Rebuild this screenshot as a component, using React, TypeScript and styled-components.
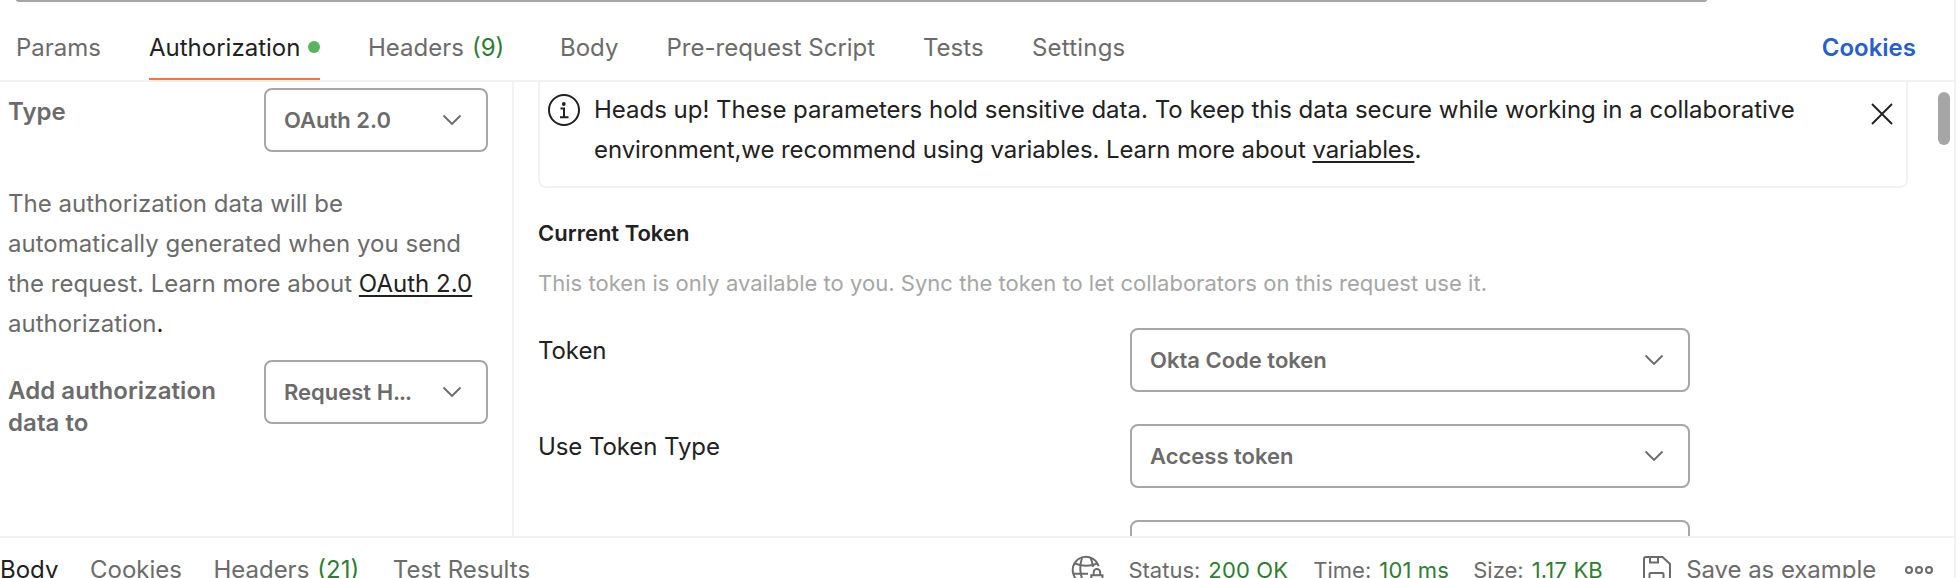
import React from "react";
import styled, { createGlobalStyle } from "styled-components";

const ink = "#212121";
const grey = "#6b6b6b";
const pale = "#a6a6a6";
const line = "#f2f2f2";
const green = "#2e7d32";

const GlobalStyle = createGlobalStyle`
  * { box-sizing: border-box; }
  body {
    margin: 0;
    background: #fff;
    color: ${ink};
    font-family: Inter, "Liberation Sans", sans-serif;
    font-size: 24px;
    overflow: hidden;
  }
`;

const Window = styled.div`
  width: 1956px;
  height: 578px;
  border-right: 2px solid ${line};
  display: flex;
  flex-direction: column;
  overflow: hidden;
  white-space: nowrap;
`;

const UrlBarEdge = styled.div`
  flex: none;
  height: 2px;
  margin: 0 247px 0 16px;
  background: ${pale};
  border-radius: 0 0 4px 4px / 0 0 2px 2px;
`;

const TabBar = styled.nav`
  flex: none;
  height: 80px;
  padding: 0 38px 0 16px;
  display: flex;
  border-bottom: 2px solid ${line};
`;

const Tab = styled.a<{ $active?: boolean; $width: number; $gap: number; $tracking?: number }>`
  display: flex;
  align-items: center;
  width: ${(p) => p.$width}px;
  height: 78px;
  padding-top: ${(p) => (p.$active ? 14 : 12)}px;
  margin-right: ${(p) => p.$gap}px;
  letter-spacing: ${(p) => p.$tracking ?? 0}px;
  color: ${(p) => (p.$active ? ink : grey)};
  border-bottom: ${(p) => (p.$active ? "2px solid #f37542" : "0")};
`;

const Count = styled.span`
  margin-left: 8px;
  color: ${green};
`;

const Dot = styled.span`
  width: 12px;
  height: 12px;
  margin-left: auto;
  border-radius: 50%;
  background: #58b55c;
`;

const CookiesLink = styled.a`
  margin-left: auto;
  height: 78px;
  padding-top: 12px;
  display: flex;
  align-items: center;
  font-weight: 600;
  color: #265fd1;
`;

const Main = styled.div`
  flex: none;
  height: 454px;
  display: flex;
  overflow: hidden;
`;

const Sidebar = styled.aside`
  width: 514px;
  padding: 6px 24px 0 8px;
  border-right: 2px solid ${line};
`;

const SideRow = styled.div`
  display: flex;
  justify-content: space-between;
`;

const SideLabel = styled.div<{ $top: number }>`
  padding-top: ${(p) => p.$top}px;
  font-weight: 600;
  line-height: 32px;
  letter-spacing: 0.06px;
  color: ${grey};
`;

const SideText = styled.p`
  margin: 32px 0 16px;
  line-height: 40px;
  letter-spacing: 0.02px;
  color: ${grey};
`;

const Link = styled.a`
  color: ${ink};
  text-decoration: underline;
  text-decoration-thickness: 2px;
  text-underline-offset: 3px;
`;

const Stop = styled.span`
  color: ${ink};
`;

const SelectBox = styled.div<{ $width: number }>`
  flex: none;
  width: ${(p) => p.$width}px;
  height: 64px;
  padding: 0 24px 0 18px;
  display: flex;
  align-items: center;
  justify-content: space-between;
  border: 2px solid ${pale};
  border-radius: 8px;
  font-size: 22px;
  font-weight: 600;
  color: ${grey};
`;

const Dots = styled.span`
  letter-spacing: -1px;
`;

const Content = styled.section`
  flex: 1;
  padding-left: 24px;
`;

const Banner = styled.div`
  width: 1370px;
  height: 106px;
  padding: 8px 12px 0 7px;
  display: flex;
  align-items: flex-start;
  border: 2px solid ${line};
  border-top: 0;
  border-radius: 0 0 8px 8px;
`;

const BannerText = styled.p`
  flex: 1;
  margin: 0 0 0 13px;
  line-height: 40px;
  letter-spacing: -0.01px;
`;

const BannerTail = styled.span`
  letter-spacing: -0.08px;
`;

const Heading = styled.h2`
  margin: 31px 0 0;
  font-size: 22px;
  line-height: 28px;
  font-weight: 600;
`;

const Hint = styled.p`
  margin: 22px 0 31px;
  font-size: 22px;
  line-height: 28px;
  letter-spacing: 0.025px;
  color: ${pale};
`;

const Field = styled.div`
  display: flex;
  height: 96px;
`;

const FieldLabel = styled.label`
  width: 592px;
  padding-top: 9px;
  line-height: 28px;
  letter-spacing: -0.08px;
`;

const ScrollTrack = styled.div`
  width: 16px;
  padding-top: 10px;
`;

const ScrollThumb = styled.div`
  width: 12px;
  height: 53px;
  border-radius: 6px;
  background: ${pale};
`;

const Footer = styled.footer`
  flex: none;
  height: 64px;
  padding: 16px 20px 0 0;
  display: flex;
  align-items: flex-start;
  border-top: 2px solid ${line};
  color: ${grey};
  line-height: 32px;
`;

const FooterTab = styled.span<{ $active?: boolean; $width: number }>`
  width: ${(p) => p.$width}px;
  color: ${(p) => (p.$active ? ink : grey)};
`;

const Stat = styled.span<{ $width: number }>`
  width: ${(p) => p.$width}px;
  font-size: 22px;
  line-height: 32px;
`;

const StatValue = styled.span`
  margin-left: 8px;
  letter-spacing: 0.15px;
  color: ${green};
`;

const IconSlot = styled.span<{ $width: number; $top?: number }>`
  width: ${(p) => p.$width}px;
  padding-top: ${(p) => p.$top ?? 0}px;
  display: flex;
`;

const BannerIcon = styled.span<{ $top: number }>`
  display: flex;
  padding-top: ${(p) => p.$top}px;
`;

const SaveLabel = styled.span`
  width: 218px;
  letter-spacing: -0.05px;
`;

const Chevron = () => (
  <svg width="20" height="12" viewBox="0 0 20 12" fill="none" stroke={grey} strokeWidth="1.9">
    <path d="M1.5 1.5 10 10l8.500-8.500" />
  </svg>
);

const InfoIcon = () => (
  <svg width="34" height="34" viewBox="0 0 34 34" fill="none" stroke={ink} strokeWidth="2">
    <circle cx="17" cy="17" r="15" />
    <path d="M13.500 15.500H17V24.500M13 24.300h8.500" />
    <circle cx="16.800" cy="11" r="1.900" fill={ink} stroke="none" />
  </svg>
);

const CloseIcon = () => (
  <svg width="24" height="24" viewBox="0 0 24 24" fill="none" stroke={ink} strokeWidth="1.900">
    <path d="M2 2l20 20M22 2 2 22" />
  </svg>
);

const GlobeLockIcon = () => (
  <svg width="34" height="34" viewBox="0 0 34 34" fill="none" stroke={grey} strokeWidth="2">
    <path d="M27.600 12.300A13.200 13.200 0 1 0 17 29" />
    <path d="M11 4C8.500 11 8.500 21 13 29M19.500 3.600Q21.500 8 22 13" />
    <path d="M4 9.500Q15 14 26.500 9.500M3 19.800H17" />
    <path d="M22.700 21v-2.700a3.200 3.200 0 0 1 6.400 0V21M20.300 21.300H31.500v10H20.300z" />
  </svg>
);

const SaveIcon = () => (
  <svg width="28" height="28" viewBox="0 0 28 28" fill="none" stroke={grey} strokeWidth="2">
    <path d="M3 1h16.500L27 8v17q0 2-2 2H3q-2 0-2-2V3q0-2 2-2z" />
    <path d="M7 1v5.500h8V1M6.500 27v-9q0-1 1-1h12q1 0 1 1v9" />
  </svg>
);

const MoreIcon = () => (
  <svg width="30" height="10" viewBox="0 0 30 10" fill="none" stroke={grey} strokeWidth="2">
    <circle cx="5" cy="5" r="3" />
    <circle cx="15" cy="5" r="3" />
    <circle cx="25" cy="5" r="3" />
  </svg>
);

const Select = ({ width, children }: { width: number; children?: React.ReactNode }) => (
  <SelectBox $width={width}>
    <span>{children}</span>
    <Chevron />
  </SelectBox>
);

const App = () => (
  <>
    <GlobalStyle />
    <Window>
      <UrlBarEdge />
      <TabBar>
        <Tab $width={84} $gap={49}>Params</Tab>
        <Tab $active $width={171} $gap={48}>Authorization<Dot /></Tab>
        <Tab $width={136} $gap={56}>Headers<Count>(9)</Count></Tab>
        <Tab $width={58} $gap={48.5}>Body</Tab>
        <Tab $width={209} $gap={47.5}>Pre-request Script</Tab>
        <Tab $width={61} $gap={48}>Tests</Tab>
        <Tab $width={95} $gap={0} $tracking={0.2}>Settings</Tab>
        <CookiesLink>Cookies</CookiesLink>
      </TabBar>
      <Main>
        <Sidebar>
          <SideRow>
            <SideLabel $top={8}>Type</SideLabel>
            <Select width={224}>OAuth 2.0</Select>
          </SideRow>
          <SideText>
            The authorization data will be<br />
            automatically generated when you send<br />
            the request. Learn more about <Link>OAuth 2.0</Link><br />
            authorization<Stop>.</Stop>
          </SideText>
          <SideRow>
            <SideLabel $top={15}>Add authorization<br />data to</SideLabel>
            <Select width={224}>Request H<Dots>...</Dots></Select>
          </SideRow>
        </Sidebar>
        <Content>
          <Banner>
            <BannerIcon $top={3}><InfoIcon /></BannerIcon>
            <BannerText>
              Heads up! These parameters hold sensitive data. To keep this data secure while working in a collaborative<br />
              <BannerTail>
                environment,we recommend using variables. Learn more about <Link>variables</Link>.
              </BannerTail>
            </BannerText>
            <BannerIcon $top={12}><CloseIcon /></BannerIcon>
          </Banner>
          <Heading>Current Token</Heading>
          <Hint>This token is only available to you. Sync the token to let collaborators on this request use it.</Hint>
          <Field>
            <FieldLabel>Token</FieldLabel>
            <Select width={560}>Okta Code token</Select>
          </Field>
          <Field>
            <FieldLabel>Use Token Type</FieldLabel>
            <Select width={560}>Access token</Select>
          </Field>
          <Field>
            <FieldLabel />
            <Select width={560} />
          </Field>
        </Content>
        <ScrollTrack>
          <ScrollThumb />
        </ScrollTrack>
      </Main>
      <Footer>
        <FooterTab $active $width={90}>Body</FooterTab>
        <FooterTab $width={123.5}>Cookies</FooterTab>
        <FooterTab $width={179.500}>Headers<Count>(21)</Count></FooterTab>
        <FooterTab $width={679}>Test Results</FooterTab>
        <IconSlot $width={57}><GlobeLockIcon /></IconSlot>
        <Stat $width={185}>Status:<StatValue>200 OK</StatValue></Stat>
        <Stat $width={160}>Time:<StatValue>101 ms</StatValue></Stat>
        <Stat $width={170}>Size:<StatValue>1.17 KB</StatValue></Stat>
        <IconSlot $width={43} $top={2}><SaveIcon /></IconSlot>
        <SaveLabel>Save as example</SaveLabel>
        <IconSlot $width={30} $top={11}><MoreIcon /></IconSlot>
      </Footer>
    </Window>
  </>
);

export default App;
